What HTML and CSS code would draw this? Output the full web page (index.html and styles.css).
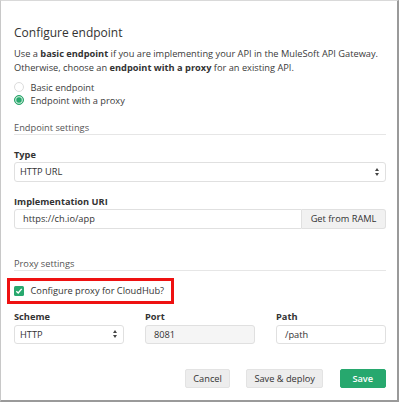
FILE: index.html
```html
<!DOCTYPE html>
<html>
<head>
<meta charset="utf-8">
<link rel="stylesheet" href="styles.css">
</head>
<body>
<div class="frame">
  <h1 class="title">Configure endpoint</h1>
  <p class="intro">Use a <b>basic endpoint</b> if you are implementing your API in the MuleSoft API Gateway. Otherwise, choose an <b>endpoint with a proxy</b> for an existing API.</p>
  <div class="radios">
    <label class="radio-row"><span class="radio"></span>Basic endpoint</label>
    <label class="radio-row"><span class="radio checked"></span>Endpoint with a proxy</label>
  </div>

  <div class="section-head">Endpoint settings</div>
  <div class="field">
    <div class="label">Type</div>
    <div class="select wide"><span>HTTP URL</span><span class="arrows"></span></div>
  </div>
  <div class="field">
    <div class="label">Implementation URI</div>
    <div class="input-group">
      <div class="input grow">https://ch.io/app</div>
      <div class="addon">Get from RAML</div>
    </div>
  </div>

  <div class="section-head proxy">Proxy settings</div>
  <div class="highlight">
    <span class="checkbox"><svg width="8" height="8" viewBox="0 0 8 8"><path d="M1.3 4.2 L3.2 6 L6.7 1.9" fill="none" stroke="#fff" stroke-width="1.4"/></svg></span>
    <span>Configure proxy for CloudHub?</span>
  </div>
  <div class="proxy-row">
    <div class="col">
      <div class="label">Scheme</div>
      <div class="select"><span>HTTP</span><span class="arrows"></span></div>
    </div>
    <div class="col">
      <div class="label">Port</div>
      <div class="input disabled">8081</div>
    </div>
    <div class="col">
      <div class="label">Path</div>
      <div class="input">/path</div>
    </div>
  </div>

  <div class="actions">
    <button class="btn">Cancel</button>
    <button class="btn">Save &amp; deploy</button>
    <button class="btn primary">Save</button>
  </div>
</div>
</body>
</html>
```

FILE: styles.css
```css
* { box-sizing: border-box; }
html, body { margin: 0; padding: 0; background: #fff; }
body {
  font-family: "Open Sans", "DejaVu Sans", sans-serif;
  font-size: 9.25px;
  color: #3a3a3a;
  width: 400px;
  height: 403px;
  overflow: hidden;
}
.frame {
  width: 399px;
  height: 402px;
  border-top: 1px solid #d9d9d9;
  border-left: 1px solid #c8c8c8;
  border-right: 2px solid #9a9a9a;
  border-bottom: 2px solid #9a9a9a;
  padding: 24px 11px 0 13px;
}
.title {
  margin: 0;
  font-size: 12px;
  font-weight: 400;
  line-height: 16px;
  color: #333;
}
.intro {
  margin: 5.5px 0 0;
  line-height: 14px;
}
.intro b { font-weight: 700; color: #333; }
.radios {
  margin-top: 6px;
  display: flex;
  flex-direction: column;
}
.radio-row {
  display: flex;
  align-items: center;
  height: 13px;
  line-height: 13px;
  gap: 6.5px;
}
.radio {
  width: 10px;
  height: 10px;
  border-radius: 50%;
  border: 1px solid #dcdcdc;
  background: #fff;
  flex: none;
}
.radio.checked {
  border: 1px solid #2aa46b;
  background: #27a86e;
  box-shadow: inset 0 0 0 1.3px #bfe6d1;
}
.section-head {
  margin-top: 14.5px;
  line-height: 14px;
  color: #555;
  padding-bottom: 0;
  border-bottom: 1px solid #e6e6e6;
  height: 14px;
}
.section-head.proxy { margin-top: 28px; }
.field { margin-top: 12.5px; }
.field + .field { margin-top: 13px; }
.label {
  font-weight: 700;
  line-height: 14px;
  color: #333;
}
.select, .input {
  height: 19.5px;
  border: 1px solid #e0e0e0;
  border-radius: 3px;
  background: #fff;
  display: flex;
  align-items: center;
  padding: 0 5px;
  margin-top: 0.5px;
  color: #333;
}
.select { justify-content: space-between; }
.arrows {
  width: 5px;
  height: 8px;
  position: relative;
}
.arrows::before, .arrows::after {
  content: "";
  position: absolute;
  left: 0;
  border-left: 2.5px solid transparent;
  border-right: 2.5px solid transparent;
}
.arrows::before { top: 0; border-bottom: 3px solid #444; }
.arrows::after { bottom: 0; border-top: 3px solid #444; }
.input-group {
  display: flex;
  margin-top: 0.5px;
}
.input-group .input {
  margin-top: 0;
  border-radius: 3px 0 0 3px;
  padding-left: 8px;
}
.grow { flex: 1; }
.addon {
  width: 84px;
  height: 19.5px;
  border: 1px solid #e0e0e0;
  border-left: none;
  border-radius: 0 3px 3px 0;
  background: #f1f1f1;
  display: flex;
  align-items: center;
  justify-content: center;
  color: #333;
}
.highlight {
  display: inline-flex;
  align-items: center;
  margin: 7px 0 0 -7px;
  padding: 3px 7px 3px 4px;
  border: 3px solid #ee1111;
  line-height: 14px;
  gap: 6.5px;
  color: #333;
}
.checkbox {
  width: 10px;
  height: 10px;
  border-radius: 1.5px;
  background: #27a86e;
  display: flex;
  align-items: center;
  justify-content: center;
}
.checkbox svg { display: block; }
.proxy-row {
  display: grid;
  grid-template-columns: 110px 110px 110px;
  column-gap: 21px;
  margin-top: 6.5px;
}
.proxy-row .input, .proxy-row .select { height: 19px; }
.proxy-row .input { padding-left: 8px; }
.input.disabled { background: #f5f5f5; }
.actions {
  display: flex;
  justify-content: flex-end;
  gap: 16.5px;
  margin-top: 25.5px;
}
.btn {
  font-family: inherit;
  font-size: 9.25px;
  height: 19px;
  padding: 0 7px;
  border: 1px solid #e3e3e3;
  border-radius: 2px;
  background: #ededed;
  color: #333;
  line-height: 17px;
}
.btn.primary {
  background: #27a86e;
  border-color: #27a86e;
  color: #fff;
  font-weight: 600;
  width: 46.5px;
}
```
